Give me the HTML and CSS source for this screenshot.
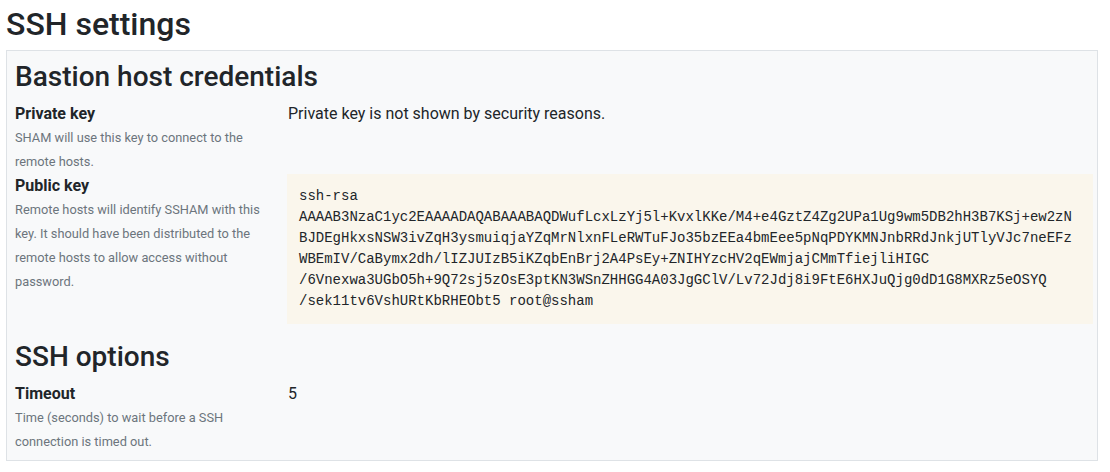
FILE: index.html
```html
<!DOCTYPE html>
<html lang="en">
<head>
<meta charset="utf-8">
<title>SSH settings</title>
<link rel="stylesheet" href="styles.css">
</head>
<body>
<main class="page">
  <h1 class="page-title">SSH settings</h1>
  <section class="card">
    <h2 class="section-title">Bastion host credentials</h2>
    <div class="setting">
      <div class="setting-label">
        <div class="label-name">Private key</div>
        <small class="label-help">SHAM will use this key to connect to the remote hosts.</small>
      </div>
      <div class="setting-value">Private key is not shown by security reasons.</div>
    </div>
    <div class="setting">
      <div class="setting-label">
        <div class="label-name">Public key</div>
        <small class="label-help">Remote hosts will identify SSHAM with this key. It should have been distributed to the remote hosts to allow access without password.</small>
      </div>
      <div class="setting-value">
<pre class="key">ssh-rsa
AAAAB3NzaC1yc2EAAAADAQABAAABAQDWufLcxLzYj5l+KvxlKKe/M4+e4GztZ4Zg2UPa1Ug9wm5DB2hH3B7KSj+ew2zN
BJDEgHkxsNSW3ivZqH3ysmuiqjaYZqMrNlxnFLeRWTuFJo35bzEEa4bmEee5pNqPDYKMNJnbRRdJnkjUTlyVJc7neEFz
WBEmIV/CaBymx2dh/lIZJUIzB5iKZqbEnBrj2A4PsEy+ZNIHYzcHV2qEWmjajCMmTfiejliHIGC
/6Vnexwa3UGbO5h+9Q72sj5zOsE3ptKN3WSnZHHGG4A03JgGClV/Lv72Jdj8i9FtE6HXJuQjg0dD1G8MXRz5eOSYQ
/sek11tv6VshURtKbRHEObt5 root@ssham</pre>
      </div>
    </div>
    <h2 class="section-title">SSH options</h2>
    <div class="setting">
      <div class="setting-label">
        <div class="label-name">Timeout</div>
        <small class="label-help">Time (seconds) to wait before a SSH connection is timed out.</small>
      </div>
      <div class="setting-value">5</div>
    </div>
  </section>
</main>
</body>
</html>
```

FILE: styles.css
```css
html, body {
  margin: 0;
  padding: 0;
  background: #ffffff;
}

body {
  font-family: Roboto, "Liberation Sans", Arial, sans-serif;
  font-size: 16px;
  line-height: 24px;
  color: #212529;
}

.page {
  padding: 5px 12px 0 6px;
}

.page-title {
  margin: 0 0 7px;
  font-size: 32px;
  font-weight: 500;
  line-height: 1.2;
}

.card {
  background: #f8f9fa;
  border: 1px solid #dee2e6;
  padding: 9px 4px 6px 8px;
}

.section-title {
  margin: 0 0 8px;
  font-size: 28px;
  font-weight: 500;
  line-height: 1.2;
}

.setting {
  display: grid;
  grid-template-columns: 272px 1fr;
}

.setting-value {
  padding-left: 1px;
}

.label-name {
  font-weight: 700;
}

.label-help {
  display: block;
  font-size: 12.8px;
  line-height: 24px;
  color: #6c757d;
  padding-right: 16px;
}

.key {
  margin: 0 0 16px -1px;
  padding: 12px;
  background: #faf6ec;
  font-family: "Liberation Mono", "DejaVu Sans Mono", monospace;
  font-size: 14px;
  line-height: 21px;
  color: #212529;
  white-space: pre;
}
```
